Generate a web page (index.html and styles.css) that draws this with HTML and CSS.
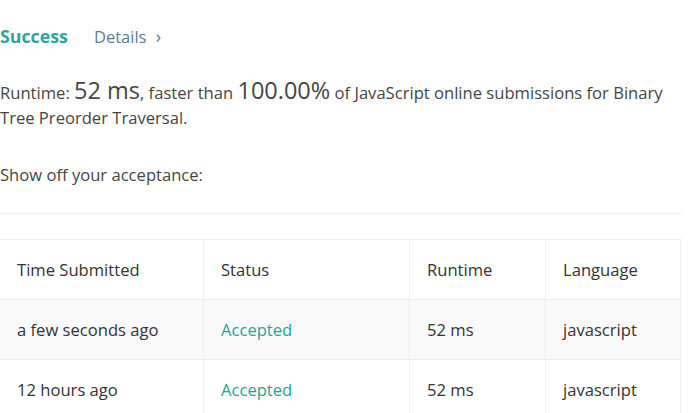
FILE: index.html
```html
<!DOCTYPE html>
<html>
<head>
<meta charset="utf-8">
<link rel="stylesheet" href="styles.css">
</head>
<body>
<div class="page">
  <div class="result-head">
    <span class="success">Success</span>
    <a class="details">Details <span class="chev">›</span></a>
  </div>
  <p class="runtime">Runtime: <span class="big">52 ms</span>, faster than <span class="big">100.00%</span> of JavaScript online submissions for Binary Tree Preorder Traversal.</p>
  <p class="show">Show off your acceptance:</p>
  <hr class="sep">
  <table class="subs">
    <thead>
      <tr><th class="c1">Time Submitted</th><th class="c2">Status</th><th class="c3">Runtime</th><th class="c4">Language</th></tr>
    </thead>
    <tbody>
      <tr class="odd"><td>a few seconds ago</td><td class="acc">Accepted</td><td>52 ms</td><td>javascript</td></tr>
      <tr><td>12 hours ago</td><td class="acc">Accepted</td><td>52 ms</td><td>javascript</td></tr>
    </tbody>
  </table>
</div>
</body>
</html>
```
FILE: styles.css
```css
html, body { margin: 0; padding: 0; background: #fff; }
body { font-family: "Open Sans", "Noto Sans", sans-serif; color: #454545; }
.page { width: 682px; padding-top: 24px; }
.result-head { display: flex; align-items: baseline; height: 28px; }
.success { font-size: 17.8px; font-weight: 700; color: #2aa897; }
.details { margin-left: 26px; font-size: 16.5px; color: #607d8b; }
.chev { margin-left: 5px; font-size: 18px; }
.runtime { margin: 26px 0 0; font-size: 16.6px; line-height: 25px; color: #454545; width: 682px; }
.big { display: inline-block; font-size: 23.5px; }
.show { margin: 32px 0 0; font-size: 16.6px; line-height: 25px; }
.sep { margin: 26px 0 0; border: 0; border-top: 1px solid #eee; }
.subs { margin-top: 25px; width: 681px; border-collapse: collapse; font-size: 16.6px; color: #333; }
.subs th, .subs td { text-align: left; font-weight: 400; padding: 0 0 0 17px; height: 59px; border: 1px solid #eee; }
.subs tr > :first-child { border-left: 0; }
.c1 { width: 186px; }
.c2 { width: 188px; }
.c3 { width: 118px; }
.odd { background: #fafafa; }
.acc { color: #1fa393; }
```
